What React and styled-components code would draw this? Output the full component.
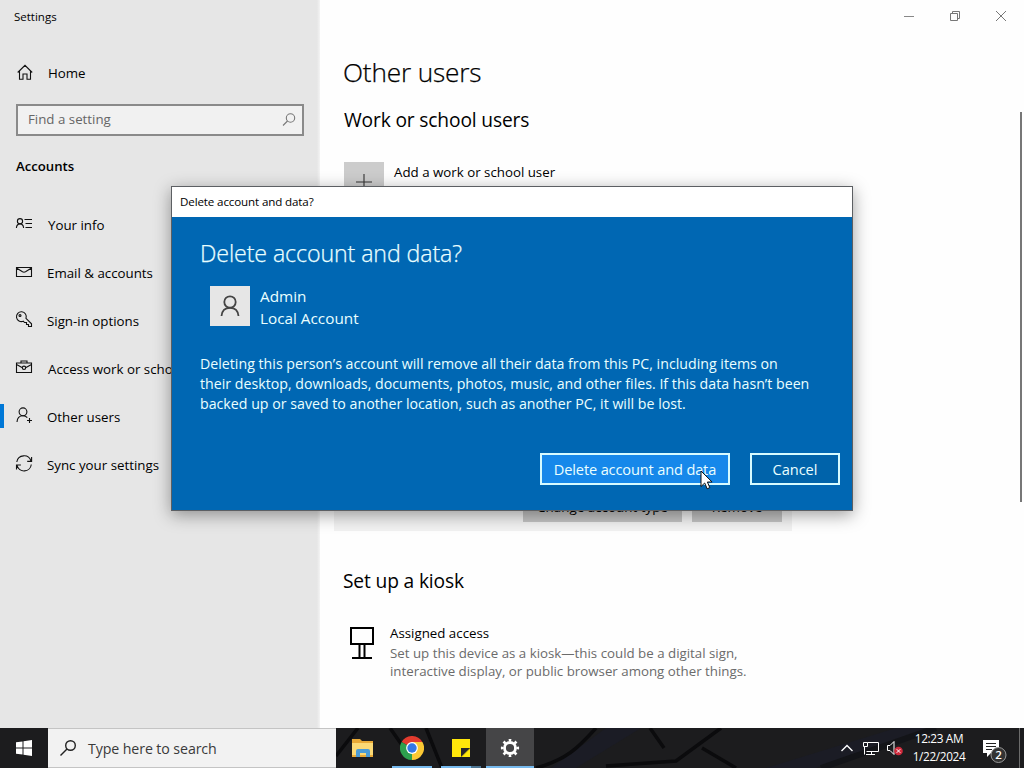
import React from "react";
import styled, { createGlobalStyle, css } from "styled-components";

const GlobalStyle = createGlobalStyle`
  body {
    margin: 0;
    overflow: hidden;
    background: #fefefe;
    font-family: "Open Sans", "Noto Sans", sans-serif;
    color: #000;
  }
  * {
    box-sizing: border-box;
  }
`;

const Desktop = styled.div`
  position: relative;
  display: flex;
  flex-direction: column;
  width: 1024px;
  height: 768px;
  overflow: hidden;
`;

const SettingsWindow = styled.div`
  display: flex;
  height: 728px;
`;

/* sidebar */

const Sidebar = styled.div`
  width: 320px;
  background: linear-gradient(to right, #e6e6e6 317px, #f4f4f4);
`;

const WindowTitle = styled.div`
  height: 49px;
  padding: 8px 14px;
  font-size: 11.5px;
  line-height: 17px;
`;

const NavItem = styled.div`
  display: flex;
  align-items: center;
  height: 48px;
  padding-left: 16px;
  font-size: 13.3px;
  white-space: nowrap;
  svg {
    flex: none;
    width: 16px;
    height: 18px;
    margin: -2px ${(props) => (props.wide ? 16 : 15)}px 0 0;
    overflow: visible;
  }
  ${(props) =>
    props.active &&
    css`
      padding-left: 0;
      &::before {
        content: "";
        width: 4px;
        height: 24px;
        margin: -2px 12px 0 0;
        background: #0078d7;
      }
    `}
`;

const FindBox = styled.div`
  display: flex;
  align-items: center;
  justify-content: space-between;
  width: 288px;
  height: 32px;
  margin: 7px 0 0 16px;
  padding: 0 5px 2px 10px;
  border: 2px solid #8a8a8a;
  background: #f1f1f1;
  font-size: 13.3px;
  color: #666;
  svg {
    margin-top: 2px;
  }
`;

const Category = styled.div`
  height: 65px;
  padding: 20px 0 0 16px;
  font-size: 13.2px;
  line-height: 20px;
  font-weight: 600;
`;

/* main pane */

const Main = styled.div`
  display: flex;
  flex: 1;
  flex-direction: column;
`;

const Caption = styled.div`
  display: flex;
  justify-content: flex-end;
  height: 32px;
`;

const CaptionButton = styled.div`
  display: flex;
  align-items: center;
  justify-content: center;
  width: 46px;
  height: 32px;
`;

const Scroller = styled.div`
  display: flex;
  justify-content: space-between;
`;

const Page = styled.div`
  width: 480px;
  padding-left: 23px;
`;

const PageTitle = styled.h1`
  margin: 0;
  padding-top: 20px;
  font-size: 26.2px;
  line-height: 40px;
  font-weight: 300;
  letter-spacing: -0.15px;
  -webkit-text-stroke: 0.25px;
`;

const SectionTitle = styled.h2`
  margin: 0;
  height: 70px;
  padding: 14px 0 0 1px;
  font-size: 19.2px;
  line-height: 28px;
  font-weight: 400;
  letter-spacing: -0.15px;
`;

const AddRow = styled.div`
  display: flex;
  height: 60px;
  padding-left: 1px;
  font-size: 13.3px;
  line-height: 20px;
`;

const AddTile = styled.div`
  display: flex;
  align-items: center;
  justify-content: center;
  width: 40px;
  height: 40px;
  margin-right: 10px;
  background: #ccc;
`;

const UserCard = styled.div`
  display: flex;
  align-items: flex-end;
  justify-content: flex-end;
  gap: 10px;
  width: 458px;
  height: 309px;
  margin-left: -9px;
  padding: 0 10px 9px;
  background: #f2f2f2;
`;

const CardButton = styled.div`
  width: ${(props) => props.width}px;
  height: 32px;
  background: #c4c4c4;
  font-size: 13.4px;
  line-height: 34px;
  text-align: center;
`;

const KioskTitle = styled(SectionTitle)`
  height: 93px;
  padding: 36px 0 0;
`;

const Kiosk = styled.div`
  display: flex;
  padding-left: 6px;
  svg {
    margin: 2px 15px 0 0;
  }
`;

const KioskText = styled.div`
  width: 380px;
  font-size: 13.3px;
  line-height: 18px;
  color: #6b6b6b;
  white-space: nowrap;
`;

const KioskName = styled.div`
  height: 20px;
  color: #000;
  font-size: 13.3px;
`;

const Scrollbar = styled.div`
  width: 2px;
  height: 390px;
  margin: 80px 2px 0 0;
  background: #777;
`;

/* dialog */

const Dialog = styled.div`
  position: absolute;
  left: 171px;
  top: 186px;
  display: flex;
  flex-direction: column;
  width: 682px;
  height: 325px;
  border: 1px solid #5c5f63;
  background: #0067b3;
  box-shadow: 0 4px 16px rgba(0, 0, 0, 0.38);
  color: #eaffff;
`;

const DialogCaption = styled.div`
  height: 30px;
  padding-left: 8px;
  background: #fff;
  color: #000;
  font-size: 11.6px;
  line-height: 29px;
  letter-spacing: -0.13px;
`;

const DialogBody = styled.div`
  display: flex;
  flex: 1;
  flex-direction: column;
  padding: 19px 12px 25px 28px;
`;

const DialogTitle = styled.div`
  height: 49px;
  font-size: 23.2px;
  line-height: 34px;
  font-weight: 300;
  letter-spacing: -0.1px;
  -webkit-text-stroke: 0.25px;
`;

const Account = styled.div`
  display: flex;
  height: 68px;
  padding: 1px 0 0 10px;
  font-size: 15.3px;
  line-height: 22px;
`;

const AccountName = styled.div`
  margin-top: -1px;
`;

const Avatar = styled.div`
  display: flex;
  align-items: center;
  justify-content: center;
  width: 40px;
  height: 40px;
  margin-right: 10px;
  background: #e6e6e6;
`;

const Warning = styled.div`
  flex: 1;
  padding-top: 1px;
  font-size: 14.2px;
  line-height: 20px;
  white-space: nowrap;
`;

const DialogActions = styled.div`
  display: flex;
  justify-content: flex-end;
  gap: 20px;
`;

const DialogButton = styled.div`
  width: ${(props) => (props.hot ? 190 : 90)}px;
  height: 32px;
  border: 2px solid #d6fbff;
  background: ${(props) => (props.hot ? "#1688ea" : "#0063aa")};
  font-size: 14.6px;
  line-height: 28px;
  text-align: center;
  white-space: nowrap;
  letter-spacing: ${(props) => (props.hot ? -0.15 : -0.05)}px;
`;

const Cursor = styled.svg`
  position: absolute;
  left: 700px;
  top: 470px;
`;

/* taskbar */

const Taskbar = styled.div`
  position: relative;
  display: flex;
  height: 40px;
  background: #1c1c1e;
`;

const Wallpaper = styled.svg`
  position: absolute;
  left: 336px;
  top: 0;
`;

const StartButton = styled.div`
  display: flex;
  align-items: center;
  justify-content: center;
  width: 48px;
`;

const SearchBox = styled.div`
  display: flex;
  align-items: center;
  width: 288px;
  padding-left: 12px;
  border: 1px solid #c4c4c4;
  border-width: 1px 0;
  background: #f2f2f2;
  color: #3a3a3a;
  font-size: 14.2px;
  letter-spacing: -0.1px;
  svg {
    margin-right: 12px;
  }
`;

const Apps = styled.div`
  position: relative;
  display: flex;
  flex: 1;
  gap: 1px;
  padding-left: 3px;
`;

const AppButton = styled.div`
  display: flex;
  flex-direction: column;
  align-items: center;
  justify-content: space-between;
  width: 48px;
  background: ${(props) => (props.active ? "#454547" : "transparent")};
  svg {
    margin-top: 8px;
  }
`;

const Underline = styled.div`
  width: ${(props) => props.width}px;
  height: 2px;
  background: linear-gradient(
    to right,
    #76b9ed ${(props) => props.split || 100}%,
    #4d7592 0
  );
`;

const Tray = styled.div`
  position: relative;
  display: flex;
  align-items: center;
  width: 184px;
  color: #fff;
  svg {
    flex: none;
  }
`;

const Clock = styled.div`
  width: 60px;
  margin: -2px 0 0 -7px;
  font-size: 11.8px;
  line-height: 18px;
  text-align: center;
  white-space: nowrap;
  letter-spacing: -0.35px;
`;

const Notifications = styled.svg`
  margin-left: 14px;
`;

const ShowDesktop = styled.div`
  height: 40px;
  margin-left: auto;
  margin-right: 4px;
  border-left: 1px solid #6b6b6b;
`;

const Icon = ({ children, w = 16, h = 16, color = "#111", stroke = 1.1 }) => (
  <svg
    width={w}
    height={h}
    viewBox={`0 0 ${w} ${h}`}
    fill="none"
    stroke={color}
    strokeWidth={stroke}
  >
    {children}
  </svg>
);

const nav = [
  {
    label: "Your info",
    wide: true,
    icon: (
      <>
        <circle cx="4" cy="6.2" r="2.6" />
        <path d="M.4 13C.6 10.300 2 8.900 4 8.900S7.400 10.300 7.600 13M8.500 4.500H16M9.500 8.500H16M9.500 12.500H16" />
      </>
    ),
  },
  {
    label: "Email & accounts",
    icon: <path d="M.5 4.500h15v9H.5zM.5 5L6.500 8.800Q8 9.600 9.500 8.800L15.500 5" />,
  },
  {
    label: "Sign-in options",
    icon: (
      <>
        <path d="M7.300 10.200A4.900 4.900 0 1 1 10 7.300L15.500 12.800V15.500H12.500V13.500H10.500V11.500H8.500z" />
        <circle cx="4" cy="4.500" r="1" />
      </>
    ),
  },
  {
    label: "Access work or school",
    wide: true,
    icon: (
      <>
        <path d="M.5 4h15v9.500H.5zM5 4V2h6v2M.5 5.500L6 8.500M10 8.500l5.500-3" />
        <circle cx="8" cy="8.800" r="1.700" />
      </>
    ),
  },
  {
    label: "Other users",
    active: true,
    icon: (
      <>
        <circle cx="7" cy="4.800" r="3.900" />
        <path d="M1 15C1.200 11 3.500 8.700 7 8.700c1.800 0 3.300.7 4.300 2M13.500 11v5M11 13.500h5" />
      </>
    ),
  },
  {
    label: "Sync your settings",
    icon: (
      <path d="M.8 7A7.300 7.300 0 0 1 15 6M15.600 2v4.400h-4.400M15.300 9.500A7.300 7.300 0 0 1 1 10.500M.5 14.500V10h4.400" />
    ),
  },
];

function SettingsSidebar() {
  return (
    <Sidebar>
      <WindowTitle>Settings</WindowTitle>
      <NavItem wide>
        <Icon w={16} h={18}>
          <path d="M1.700 9.500L9 2.300l7.200 7.200M3.500 8V16.200H7V11h4v5.200h3.500V8" />
        </Icon>
        Home
      </NavItem>
      <FindBox>
        Find a setting
        <Icon color="#777">
          <circle cx="9.500" cy="6" r="4.200" />
          <path d="M6.500 9L2 13.500" />
        </Icon>
      </FindBox>
      <Category>Accounts</Category>
      {nav.map((item) => (
        <NavItem key={item.label} active={item.active} wide={item.wide}>
          <Icon h={18}>{item.icon}</Icon>
          {item.label}
        </NavItem>
      ))}
    </Sidebar>
  );
}

function SettingsPage() {
  return (
    <Main>
      <Caption>
        <CaptionButton>
          <Icon w={10} h={10} color="#888" stroke={1}>
            <path d="M0 5.500h10" />
          </Icon>
        </CaptionButton>
        <CaptionButton>
          <Icon w={10} h={10} color="#777" stroke={1}>
            <path d="M.5 2.500h7v7h-7zM2.500 2.500v-2h7v7h-2" />
          </Icon>
        </CaptionButton>
        <CaptionButton>
          <Icon w={10} h={10} color="#777" stroke={1}>
            <path d="M0 0l10 10M10 0L0 10" />
          </Icon>
        </CaptionButton>
      </Caption>
      <Scroller>
        <Page>
          <PageTitle>Other users</PageTitle>
          <SectionTitle>Work or school users</SectionTitle>
          <AddRow>
            <AddTile>
              <Icon color="#333">
                <path d="M8 0v16M0 8h16" />
              </Icon>
            </AddTile>
            Add a work or school user
          </AddRow>
          <UserCard>
            <CardButton width={159}>Change account type</CardButton>
            <CardButton width={90}>Remove</CardButton>
          </UserCard>
          <KioskTitle>Set up a kiosk</KioskTitle>
          <Kiosk>
            <Icon w={26} h={34} color="#000" stroke={2}>
              <path d="M2 2h22v16H2zM10.500 18v14M15.500 18v14M3 32h20" />
            </Icon>
            <KioskText>
              <KioskName>Assigned access</KioskName>
              Set up this device as a kiosk—this could be a digital sign,
              <br />
              interactive display, or public browser among other things.
            </KioskText>
          </Kiosk>
        </Page>
        <Scrollbar />
      </Scroller>
    </Main>
  );
}

function DeleteDialog() {
  return (
    <Dialog>
      <DialogCaption>Delete account and data?</DialogCaption>
      <DialogBody>
        <DialogTitle>Delete account and data?</DialogTitle>
        <Account>
          <Avatar>
            <Icon w={20} h={22} color="#444" stroke={1.8}>
              <circle cx="10" cy="7" r="5.700" />
              <path d="M1.500 21c.4-5 3.500-8.200 8.500-8.200s8.100 3.200 8.500 8.200" />
            </Icon>
          </Avatar>
          <AccountName>
            Admin
            <br />
            Local Account
          </AccountName>
        </Account>
        <Warning>
          Deleting this person’s account will remove all their data from this
          PC, including items on
          <br />
          their desktop, downloads, documents, photos, music, and other files.
          If this data hasn’t been
          <br />
          backed up or saved to another location, such as another PC, it will
          be lost.
        </Warning>
        <DialogActions>
          <DialogButton hot>Delete account and data</DialogButton>
          <DialogButton>Cancel</DialogButton>
        </DialogActions>
      </DialogBody>
    </Dialog>
  );
}

function WindowsTaskbar() {
  return (
    <Taskbar>
      <Wallpaper width="688" height="40" fill="none">
        <path d="M215 40L270 0h35L240 40zM430 40L560 0h30L480 40z" fill="#1b1c25" />
        <path
          d="M0 28L22 0M54 0l14 20M90 0l16 40M200 40c30-8 42-20 60-40M314 0l14 20M270 38l70-5 45-33M366 20l34 20"
          stroke="#0b0b0d"
          strokeWidth="3.5"
        />
        <path d="M485 40L600 0" stroke="#131418" strokeWidth="6" />
      </Wallpaper>
      <StartButton>
        <svg width="16" height="16" fill="#fff">
          <path d="M0 2.300L6.500 1.400V7.500H0zM7.500 1.200L16 0v7.500H7.500zM0 8.500h6.500v6.100L0 13.700zM7.500 8.500H16V16l-8.500-1.200z" />
        </svg>
      </StartButton>
      <SearchBox>
        <Icon color="#222" stroke={1.4}>
          <circle cx="10.500" cy="5.500" r="4.800" />
          <path d="M7 9L.5 15.500" />
        </Icon>
        Type here to search
      </SearchBox>
      <Apps>
        <AppButton>
          <svg width="24" height="24">
            <path d="M1 3h8l2 2h11v16H1z" fill="#e8a936" />
            <path d="M1 7h21v12H1z" fill="#fbd975" />
            <path d="M5 21v-6q0-2 2-2h10q2 0 2 2v6h-4v-4H9v4z" fill="#4a9bd6" />
          </svg>
        </AppButton>
        <AppButton>
          <svg width="24" height="24">
            <path d="M12 12L1.600 6A12 12 0 0 1 22.400 6z" fill="#e33b2e" />
            <path d="M12 12L22.400 6A12 12 0 0 1 12 24z" fill="#fcc934" />
            <path d="M12 12v12A12 12 0 0 1 1.600 6z" fill="#2da04e" />
            <path d="M12 6h10.400L17 15 12 24l5-9z" fill="#fcc934" />
            <circle cx="12" cy="12" r="5.900" fill="#fff" />
            <circle cx="12" cy="12" r="4.700" fill="#3478e5" />
          </svg>
          <Underline width={40} />
        </AppButton>
        <AppButton>
          <svg width="24" height="24">
            <path d="M3 3h18v9l-8.500 9H3z" fill="#ffe70a" />
            <path d="M12 12h9l-9 9z" fill="#27272a" />
            <path d="M21 12.500V21h-8.500z" fill="#ffe70a" />
          </svg>
          <Underline width={40} split={76} />
        </AppButton>
        <AppButton active>
          <svg width="24" height="24" fill="none" stroke="#fff">
            <circle cx="12" cy="12" r="5.500" strokeWidth="2.800" />
            <circle
              cx="12"
              cy="12"
              r="7.800"
              strokeWidth="2.600"
              pathLength="80"
              strokeDasharray="4.200 5.800"
              strokeDashoffset="2.100"
            />
          </svg>
          <Underline width={48} />
        </AppButton>
      </Apps>
      <Tray>
        <Icon w={14} h={16} color="#fff" stroke={1.4}>
          <path d="M1.500 11L7 5.500l5.500 5.500" />
        </Icon>
        <svg width="62" height="20" fill="none" stroke="#fff">
          <path d="M13.500 4.500h11v9H12.500M9.500 4.500h4v4h-4zM10.500 8.500v8M17.500 13.500v3M12 16.500h9" />
          <path d="M33.500 7.500h2.500l4-4v13l-4-4h-2.500z" />
          <circle cx="44.500" cy="13" r="4.300" fill="#d02b3c" stroke="none" />
          <path d="M42.700 11.200l3.600 3.600M46.300 11.200l-3.600 3.600" />
        </svg>
        <Clock>
          12:23 AM
          <br />
          1/22/2024
        </Clock>
        <Notifications width="26" height="30">
          <path d="M0 7h16v13H8l-4 4v-4H0z" fill="#fff" />
          <path d="M3 10.500h10M3 13.500h10M3 16.500h6" stroke="#222" />
          <circle cx="15.500" cy="22" r="7.500" fill="#333" stroke="#999" />
          <text
            x="15.500"
            y="26"
            fontSize="11.500"
            fontWeight="600"
            textAnchor="middle"
            fill="#fff"
          >
            2
          </text>
        </Notifications>
        <ShowDesktop />
      </Tray>
    </Taskbar>
  );
}

export default function App() {
  return (
    <Desktop>
      <GlobalStyle />
      <SettingsWindow>
        <SettingsSidebar />
        <SettingsPage />
      </SettingsWindow>
      <WindowsTaskbar />
      <DeleteDialog />
      <Cursor width="14" height="20">
        <path
          d="M1 1v15.500l3.700-3.500 2.500 5.800 2.600-1.200L7.400 12h4.700z"
          fill="#fff"
          stroke="#111"
        />
      </Cursor>
    </Desktop>
  );
}
